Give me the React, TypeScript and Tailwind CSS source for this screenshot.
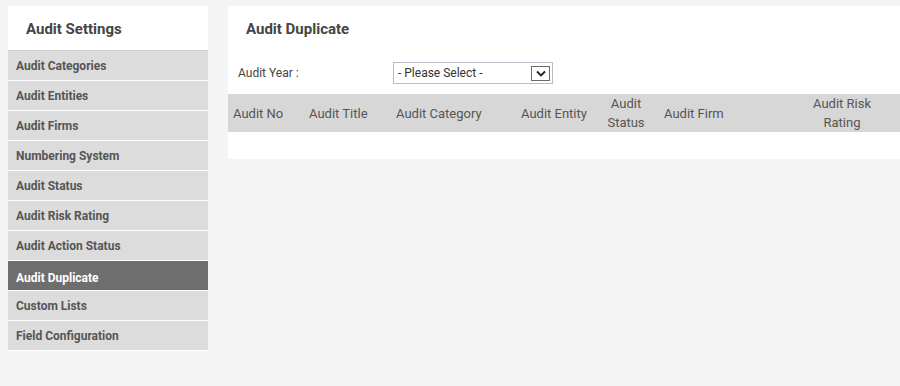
import React from "react";

const items = [
  "Audit Categories",
  "Audit Entities",
  "Audit Firms",
  "Numbering System",
  "Audit Status",
  "Audit Risk Rating",
  "Audit Action Status",
  "Audit Duplicate",
  "Custom Lists",
  "Field Configuration",
];

export default function App() {
  return (
    <div
      className="min-h-[386px] w-[900px] bg-[#f4f4f4] flex items-start pt-[6px] pl-[8px] overflow-hidden"
      style={{ fontFamily: "Roboto, 'Liberation Sans', sans-serif" }}
    >
      <aside className="w-[200px] shrink-0">
        <div className="h-[45px] bg-white border-b border-[#cfcfcf] flex items-center pl-[18px] pt-[2px] text-[15px] font-bold text-[#454545]">
          Audit Settings
        </div>
        {items.map((t) => {
          const active = t === "Audit Duplicate";
          return (
            <div
              key={t}
              className={
                active
                  ? "h-[30px] border-b border-white bg-[#6e6e6e] text-white flex items-center pl-[8px] pt-[5px] text-[12px] font-bold"
                  : "h-[30px] border-b border-white bg-[#dcdcdc] text-[#555555] flex items-center pl-[8px] pt-[1px] text-[12px] font-bold"
              }
            >
              {t}
            </div>
          );
        })}
      </aside>
      <main className="ml-[20px] flex-1 bg-white h-[153px] overflow-hidden">
        <div className="h-[46px] flex items-center pl-[18px] pt-[1px] text-[15px] font-bold text-[#454545]">
          Audit Duplicate
        </div>
        <div className="h-[42px] flex items-center pl-[10px]">
          <span className="w-[155px] text-[12px] text-[#444444]">Audit Year :</span>
          <div className="w-[160px] h-[22px] border border-[#b4bcc6] bg-white flex items-center justify-between pl-[4px] pr-[2px] text-[12px] text-[#333333]">
            <span>- Please Select -</span>
            <span className="w-[19px] h-[15px] border border-[#6b6b6b] bg-white flex items-center justify-center">
              <svg width="10" height="7" viewBox="0 0 10 7">
                <path d="M1 1.5 L5 5.5 L9 1.5" fill="none" stroke="#222" strokeWidth="1.8" />
              </svg>
            </span>
          </div>
        </div>
        <div className="h-[38px] bg-[#d7d7d7] flex items-center text-[13px] leading-[19px] text-[#555555] whitespace-nowrap">
          <div className="w-[76px] shrink-0 pl-[5px]">Audit No</div>
          <div className="w-[87px] shrink-0 pl-[5px]">Audit Title</div>
          <div className="w-[125px] shrink-0 pl-[5px]">Audit Category</div>
          <div className="w-[86px] shrink-0 pl-[5px]">Audit Entity</div>
          <div className="w-[48px] shrink-0 text-center">
            Audit
            <br />
            Status
          </div>
          <div className="w-[161px] shrink-0 pl-[14px]">Audit Firm</div>
          <div className="w-[62px] shrink-0 text-center">
            Audit Risk
            <br />
            Rating
          </div>
        </div>
        <div className="h-[27px] bg-white" />
      </main>
    </div>
  );
}
